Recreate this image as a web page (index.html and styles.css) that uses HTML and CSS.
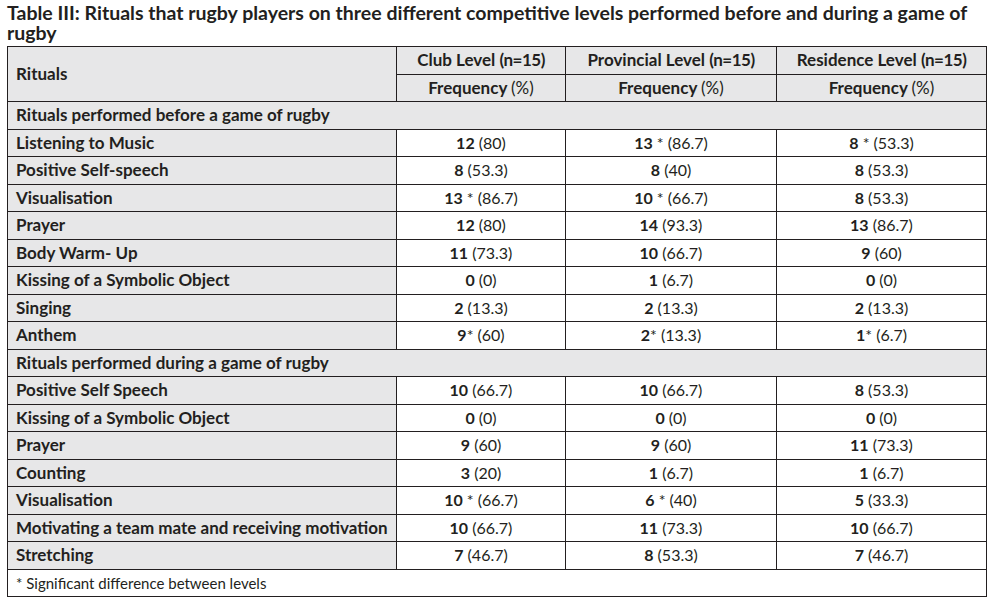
FILE: index.html
```html
<!DOCTYPE html>
<html>
<head>
<meta charset="utf-8">
<link rel="stylesheet" href="styles.css">
</head>
<body>
<h1 class="title">Table III: Rituals that rugby players on three different competitive levels performed before and during a game of rugby</h1>
<table class="tbl">
  <colgroup>
    <col class="c-rit"><col class="c-club"><col class="c-prov"><col class="c-res">
  </colgroup>
  <thead>
    <tr class="hrow">
      <th class="rit" rowspan="2">Rituals</th>
      <th>Club Level <span class="nn">(n=15)</span></th>
      <th>Provincial Level <span class="nn">(n=15)</span></th>
      <th>Residence Level <span class="nn">(n=15)</span></th>
    </tr>
    <tr class="hrow">
      <th>Frequency <span class="n">(%)</span></th>
      <th>Frequency <span class="n">(%)</span></th>
      <th>Frequency <span class="n">(%)</span></th>
    </tr>
  </thead>
  <tbody>
    <tr class="sec"><td colspan="4">Rituals performed before a game of rugby</td></tr>
    <tr><td class="rit">Listening to Music</td><td><b>12</b> (80)</td><td><b>13</b> * (86.7)</td><td><b>8</b> * (53.3)</td></tr>
    <tr><td class="rit">Positive Self-speech</td><td><b>8</b> (53.3)</td><td><b>8</b> (40)</td><td><b>8</b> (53.3)</td></tr>
    <tr><td class="rit">Visualisation</td><td><b>13</b> * (86.7)</td><td><b>10</b> * (66.7)</td><td><b>8</b> (53.3)</td></tr>
    <tr><td class="rit">Prayer</td><td><b>12</b> (80)</td><td><b>14</b> (93.3)</td><td><b>13</b> (86.7)</td></tr>
    <tr><td class="rit">Body Warm- Up</td><td><b>11</b> (73.3)</td><td><b>10</b> (66.7)</td><td><b>9</b> (60)</td></tr>
    <tr><td class="rit">Kissing of a Symbolic Object</td><td><b>0</b> (0)</td><td><b>1</b> (6.7)</td><td><b>0</b> (0)</td></tr>
    <tr><td class="rit">Singing</td><td><b>2</b> (13.3)</td><td><b>2</b> (13.3)</td><td><b>2</b> (13.3)</td></tr>
    <tr><td class="rit">Anthem</td><td><b>9</b>* (60)</td><td><b>2</b>* (13.3)</td><td><b>1</b>* (6.7)</td></tr>
    <tr class="sec"><td colspan="4">Rituals performed during a game of rugby</td></tr>
    <tr><td class="rit">Positive Self Speech</td><td><b>10</b> (66.7)</td><td><b>10</b> (66.7)</td><td><b>8</b> (53.3)</td></tr>
    <tr><td class="rit">Kissing of a Symbolic Object</td><td><b>0</b> (0)</td><td><b>0</b> (0)</td><td><b>0</b> (0)</td></tr>
    <tr><td class="rit">Prayer</td><td><b>9</b> (60)</td><td><b>9</b> (60)</td><td><b>11</b> (73.3)</td></tr>
    <tr><td class="rit">Counting</td><td><b>3</b> (20)</td><td><b>1</b> (6.7)</td><td><b>1</b> (6.7)</td></tr>
    <tr><td class="rit">Visualisation</td><td><b>10</b> * (66.7)</td><td><b>6</b> * (40)</td><td><b>5</b> (33.3)</td></tr>
    <tr><td class="rit">Motivating a team mate and receiving motivation</td><td><b>10</b> (66.7)</td><td><b>11</b> (73.3)</td><td><b>10</b> (66.7)</td></tr>
    <tr><td class="rit">Stretching</td><td><b>7</b> (46.7)</td><td><b>8</b> (53.3)</td><td><b>7</b> (46.7)</td></tr>
    <tr class="foot"><td colspan="4">* Significant difference between levels</td></tr>
  </tbody>
</table>
</body>
</html>
```

FILE: styles.css
```css
html, body {
  margin: 0;
  padding: 0;
  background: #ffffff;
}
body {
  font-family: "Lato", "Open Sans", sans-serif;
  color: #231f20;
}
.title {
  margin: 0;
  padding: 3px 0 0 7px;
  width: 975px;
  font-size: 19.5px;
  line-height: 20px;
  font-weight: bold;
  height: 46px;
  box-sizing: border-box;
}
.tbl {
  margin-left: 7px;
  border-collapse: collapse;
  table-layout: fixed;
  width: 979px;
  font-size: 16px;
}
.c-rit { width: 389px; }
.c-club { width: 169px; }
.c-prov { width: 211px; }
.c-res { width: 210px; }
.tbl td, .tbl th {
  border: 1px solid #231f20;
  height: 27.5px;
  padding: 0 8px;
  box-sizing: border-box;
  text-align: center;
  white-space: nowrap;
  line-height: 18px;
}
.tbl tr { height: 27.5px; }
.tbl th {
  background: #e7e7e8;
  font-weight: bold;
  font-size: 17px;
}
.tbl th .n { font-weight: normal; }
.tbl th .nn { letter-spacing: -0.5px; }
.tbl td.rit, .tbl th.rit {
  text-align: left;
  background: #e7e7e8;
  font-weight: bold;
  font-size: 17px;
}
.tbl .sec td {
  background: #e7e7e8;
  text-align: left;
  font-weight: bold;
  font-size: 17px;
}
.tbl .foot td {
  text-align: left;
  font-size: 15px;
  background: #fff;
}
.tbl b { font-weight: bold; }
```
